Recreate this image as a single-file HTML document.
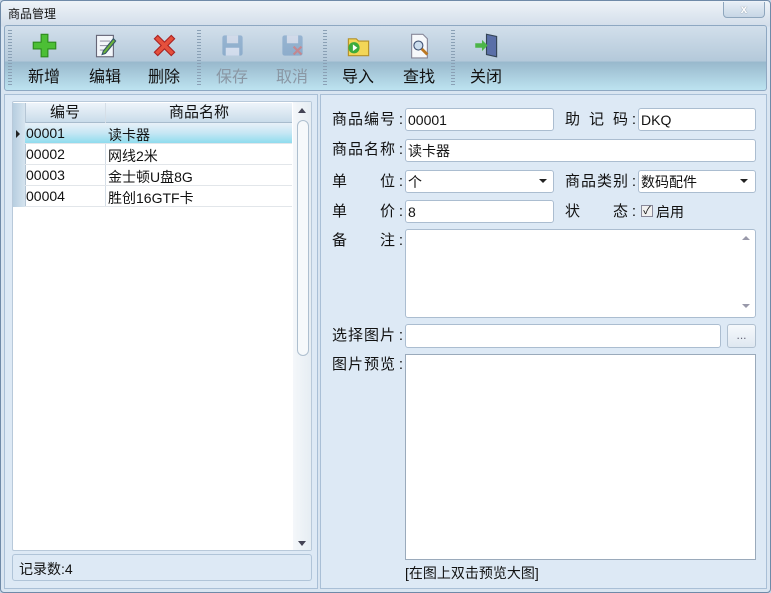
<!DOCTYPE html><html><head><meta charset="utf-8"><style>
*{box-sizing:border-box;margin:0;padding:0}
body{width:771px;height:593px;overflow:hidden;background:#c6d5e6;font-family:"Liberation Sans","Noto Sans CJK SC",sans-serif;font-size:14px;color:#111;position:relative}
.a{position:absolute}
.win{left:0;top:0;width:771px;height:593px;border:1px solid #6f8aa8;border-radius:4px;background:linear-gradient(#eef3f8,#d3deea 25px,#d9e5f1 26px)}
.tb{left:4px;top:25px;width:763px;height:66px;border:1px solid #8ea8c2;border-radius:3px;background:linear-gradient(#d2dfeb,#b4c9da 55%,#98b8cc 56%,#bde3f0)}
.btn{position:absolute;top:0;width:60px;text-align:center}
.btn .ic{position:absolute;top:6px;left:17px;width:27px;height:27px}
.btn .t{position:absolute;top:37px;width:60px;text-align:center;font-size:16px}
.dis .t{color:#8a97a4}
.sep{position:absolute;top:4px;width:4px;height:56px;background:repeating-linear-gradient(#8aa0b5 0 1px,transparent 1px 3px)}
.pnl{background:#dde9f5;border:1px solid #a9bfd6}
.in{position:absolute;background:#fff;border:1px solid #abbdd0;border-radius:3px;height:23px;padding:2px 2px;font-size:14px;line-height:18px}
.lb{position:absolute;font-size:14px;line-height:18px}
.jl{position:absolute;font-size:15px;line-height:18px;width:63px;text-align:justify;text-align-last:justify}
.jl::after{content:":";position:absolute;right:-8px}
.row{position:absolute;left:0;width:280px;height:21px;border-bottom:1px solid #e2e6ea}
.row span{position:absolute;top:2px;font-size:14px}
</style></head><body>
<div class="a win"></div>
<div class="a" style="left:8px;top:5px;font-size:12px">商品管理</div>
<div class="a" style="left:723px;top:2px;width:42px;height:16px;border:1px solid #8ea6bd;border-top:none;border-radius:0 0 4px 4px;background:linear-gradient(#e6eef6,#c7d6e5);text-align:center;font-size:12px;line-height:14px;color:#fff;font-weight:bold;text-shadow:0 0 1px #567">x</div>
<div class="a tb">
<div class="sep" style="left:3px"></div><div class="sep" style="left:192px"></div><div class="sep" style="left:318px"></div><div class="sep" style="left:446px"></div>
<div class="btn" style="left:9px"><svg class="ic" viewBox="0 0 24 24"><path d="M9 2h6v7h7v6h-7v7H9v-7H2V9h7z" fill="#4cbf35" stroke="#2d8a1e"/></svg><div class="t">新增</div></div>
<div class="btn" style="left:70px"><svg class="ic" viewBox="0 0 24 24"><rect x="4" y="3" width="15" height="19" fill="#f3f6fa" stroke="#667"/><path d="M7 8h9M7 12h9M7 16h6" stroke="#99a"/><path d="M10 17l9-11 2 2-9 11-3 1z" fill="#6cb43a" stroke="#356"/></svg><div class="t">编辑</div></div>
<div class="btn" style="left:129px"><svg class="ic" viewBox="0 0 24 24"><path d="M3 6l3-3 6 6 6-6 3 3-6 6 6 6-3 3-6-6-6 6-3-3 6-6z" fill="#e5503c" stroke="#a22"/></svg><div class="t">删除</div></div>
<div class="btn dis" style="left:197px"><svg class="ic" viewBox="0 0 24 24" opacity=".45"><rect x="3" y="3" width="18" height="18" rx="2" fill="#5a88b8"/><rect x="7" y="3" width="10" height="7" fill="#dde"/><rect x="6" y="14" width="12" height="7" fill="#eef"/></svg><div class="t">保存</div></div>
<div class="btn dis" style="left:257px"><svg class="ic" viewBox="0 0 24 24" opacity=".45"><rect x="3" y="3" width="18" height="18" rx="2" fill="#5a88b8"/><rect x="7" y="3" width="10" height="7" fill="#dde"/><path d="M13 13l7 7M20 13l-7 7" stroke="#c33" stroke-width="2"/></svg><div class="t">取消</div></div>
<div class="btn" style="left:323px"><svg class="ic" viewBox="0 0 24 24"><path d="M3 6h7l2 2h9v13H3z" fill="#f2d657" stroke="#b3902a"/><circle cx="8" cy="14" r="5" fill="#3cab3c"/><path d="M7 11l4 3-4 3z" fill="#fff"/></svg><div class="t">导入</div></div>
<div class="btn" style="left:384px"><svg class="ic" viewBox="0 0 24 24"><path d="M5 2h10l4 4v17H5z" fill="#f6f8fb" stroke="#889"/><circle cx="11" cy="12" r="4" fill="#cde" stroke="#457"/><path d="M14 15l5 5" stroke="#b72" stroke-width="2.5"/></svg><div class="t">查找</div></div>
<div class="btn" style="left:451px"><svg class="ic" viewBox="0 0 24 24"><path d="M12 2l9 2v18l-9-2z" fill="#5a6fa8" stroke="#345"/><path d="M2 10h6V7l5 5-5 5v-3H2z" fill="#4cb548"/></svg><div class="t">关闭</div></div>
</div>
<!-- left panel -->
<div class="a pnl" style="left:4px;top:94px;width:314px;height:495px"></div>
<div class="a" style="left:12px;top:101px;width:300px;height:450px;background:#fff;border:1px solid #b8c9da;border-radius:2px"></div>
<div class="a" style="left:13px;top:103px;width:279px;height:20px;background:linear-gradient(#eef4fa,#c9dcea);border-bottom:1px solid #a8bccd"></div>
<div class="a" style="left:13px;top:103px;width:12px;height:104px;background:linear-gradient(90deg,#b7cee0,#d6e4ef)"></div>
<div class="a" style="left:25px;top:103px;width:1px;height:104px;background:#b5c6d5"></div>
<div class="a" style="left:105px;top:103px;width:1px;height:104px;background:#d5dee7"></div>
<div class="a" style="left:25px;top:103px;width:80px;text-align:center;font-size:15px;line-height:20px">编号</div>
<div class="a" style="left:106px;top:103px;width:186px;text-align:center;font-size:15px;line-height:20px">商品名称</div>
<div class="a" style="left:13px;top:123px;width:279px">
<div class="row" style="top:0;left:12px;width:267px;background:linear-gradient(#e8f1f8,#c6e7f4 50%,#8fdcee)"><span style="left:1px">00001</span><span style="left:83px">读卡器</span></div>
<div class="a" style="left:3px;top:7px;width:0;height:0;border-left:4px solid #222;border-top:4px solid transparent;border-bottom:4px solid transparent"></div>
<div class="row" style="top:21px;left:12px;width:267px"><span style="left:1px">00002</span><span style="left:83px">网线2米</span></div>
<div class="row" style="top:42px;left:12px;width:267px"><span style="left:1px">00003</span><span style="left:83px">金士顿U盘8G</span></div>
<div class="row" style="top:63px;left:12px;width:267px"><span style="left:1px">00004</span><span style="left:83px">胜创16GTF卡</span></div>
</div>
<div class="a" style="left:293px;top:102px;width:18px;height:448px;background:linear-gradient(90deg,#f4f7fa,#e6edf3)"></div>
<div class="a" style="left:298px;top:108px;border-bottom:5px solid #445;border-left:4px solid transparent;border-right:4px solid transparent"></div>
<div class="a" style="left:297px;top:120px;width:12px;height:236px;border:1px solid #aebfcf;border-radius:6px;background:#f6f9fb"></div>
<div class="a" style="left:298px;top:541px;border-top:5px solid #445;border-left:4px solid transparent;border-right:4px solid transparent"></div>
<div class="a" style="left:12px;top:554px;width:300px;height:27px;border:1px solid #b0c4d8;border-radius:3px;background:#dde9f5"></div>
<div class="lb" style="left:19px;top:560px">记录数:4</div>
<!-- right panel -->
<div class="a pnl" style="left:320px;top:94px;width:447px;height:495px"></div>
<div class="jl" style="left:332px;top:111px">商品编号</div><div class="in" style="left:405px;top:108px;width:149px">00001</div>
<div class="jl" style="left:565px;top:111px">助记码</div><div class="in" style="left:638px;top:108px;width:118px">DKQ</div>
<div class="jl" style="left:332px;top:141px">商品名称</div><div class="in" style="left:405px;top:139px;width:351px">读卡器</div>
<div class="jl" style="left:332px;top:173px">单位</div><div class="in" style="left:405px;top:170px;width:149px">个</div>
<div class="a" style="left:539px;top:179px;border-top:4px solid #222;border-left:4px solid transparent;border-right:4px solid transparent"></div>
<div class="jl" style="left:565px;top:173px">商品类别</div><div class="in" style="left:638px;top:170px;width:118px">数码配件</div>
<div class="a" style="left:740px;top:179px;border-top:4px solid #222;border-left:4px solid transparent;border-right:4px solid transparent"></div>
<div class="jl" style="left:332px;top:203px">单价</div><div class="in" style="left:405px;top:200px;width:149px">8</div>
<div class="jl" style="left:565px;top:203px">状态</div>
<div class="a" style="left:641px;top:205px;width:12px;height:12px;border:1px solid #889;background:#f0f0f0;font-size:11px;line-height:10px;text-align:center">✓</div>
<div class="lb" style="left:656px;top:203px">启用</div>
<div class="jl" style="left:332px;top:232px">备注</div><div class="in" style="left:405px;top:229px;width:351px;height:89px"></div>
<div class="a" style="left:742px;top:236px;border-bottom:4px solid #99a;border-left:4px solid transparent;border-right:4px solid transparent"></div>
<div class="a" style="left:742px;top:304px;border-top:4px solid #99a;border-left:4px solid transparent;border-right:4px solid transparent"></div>
<div class="jl" style="left:332px;top:327px">选择图片</div><div class="in" style="left:405px;top:324px;width:316px;height:24px"></div>
<div class="a" style="left:727px;top:324px;width:29px;height:24px;border:1px solid #b0c0d0;border-radius:3px;background:linear-gradient(#f6f9fc,#dfe8f1);text-align:center;color:#667;font-size:12px;line-height:20px">...</div>
<div class="jl" style="left:332px;top:356px">图片预览</div>
<div class="a" style="left:405px;top:354px;width:351px;height:206px;background:#fff;border:1px solid #9aaabb"></div>
<div class="lb" style="left:405px;top:564px">[在图上双击预览大图]</div>
</body></html>
